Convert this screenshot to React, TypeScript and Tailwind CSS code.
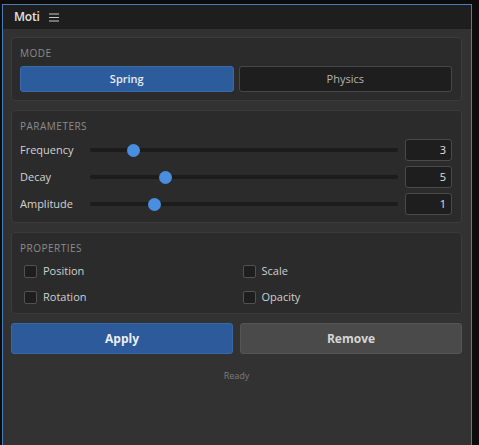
import React from 'react';

interface Param {
  label: string;
  value: number;
  pos: number;
}

const params: Param[] = [
  { label: 'Frequency', value: 3, pos: 14 },
  { label: 'Decay', value: 5, pos: 24.5 },
  { label: 'Amplitude', value: 1, pos: 21 },
];

const props = ['Position', 'Scale', 'Rotation', 'Opacity'];

const Section: React.FC<{ title: string; pb?: string; children: React.ReactNode }> = ({ title, pb = 'pb-[7px]', children }) => (
  <div className={`rounded-[4px] border border-[#3b3b3b] bg-[#2b2b2b] pl-[8px] pr-[9px] pt-[8px] ${pb}`}>
    <div className="text-[10px] leading-[14px] tracking-[0.5px] text-[#8c8c8c] mb-[6px]">{title}</div>
    {children}
  </div>
);

const App: React.FC = () => {
  return (
    <div
      className="w-[479px] h-[445px] bg-[#0c0c0c] overflow-hidden flex"
      style={{ fontFamily: '"Open Sans", "Noto Sans", sans-serif' }}
    >
      <div className="ml-[2px] mt-[4px] w-[470px] h-[445px] border border-[#4d7bb5] flex flex-col">
        {/* header */}
        <div className="h-[24px] bg-[#1e1e1e] flex items-center px-[11px] gap-[9px]">
          <span className="text-[12px] font-semibold text-[#e2e2e2] tracking-[-0.2px]">Moti</span>
          <svg width="10" height="9" viewBox="0 0 10 9" className="text-[#c8c8c8]">
            <path d="M0 1h10M0 4.5h10M0 8h10" stroke="currentColor" strokeWidth="1" />
          </svg>
        </div>

        {/* body */}
        <div className="flex-1 bg-[#323232] pl-[8px] pr-[9px] pt-[8px] flex flex-col gap-[9px]">
          <Section title="MODE">
            <div className="grid grid-cols-2 gap-[5px] pb-[1px]">
              <button className="h-[26px] rounded-[3px] bg-[#2d5c9c] border border-[#3a6aaa] text-[11px] font-semibold text-[#e8eef7]">
                Spring
              </button>
              <button className="h-[26px] rounded-[3px] bg-[#1e1e1e] border border-[#474747] text-[11px] text-[#b5b5b5]">
                Physics
              </button>
            </div>
          </Section>

          <Section title="PARAMETERS">
            <div className="flex flex-col gap-[5px]">
              {params.map(p => (
                <div key={p.label} className="flex items-center h-[22px]">
                  <span className="w-[70px] text-[11px] text-[#d2d2d2]">{p.label}</span>
                  <div className="relative flex-1 h-[4px] bg-[#1c1c1c] rounded-[2px]">
                    <div
                      className="absolute top-1/2 w-[13px] h-[13px] -mt-[6.5px] -ml-[6.5px] rounded-full bg-[#4a8ee0]"
                      style={{ left: `${p.pos}%` }}
                    />
                  </div>
                  <div className="ml-[7px] w-[47px] h-[22px] rounded-[3px] border border-[#4a4a4a] bg-[#1e1e1e] flex items-center justify-end pr-[5px] text-[11px] text-[#e0e0e0]">
                    {p.value}
                  </div>
                </div>
              ))}
            </div>
          </Section>

          <Section title="PROPERTIES" pb="pb-[5px]">
            <div className="grid grid-cols-2 gap-x-[5px] gap-y-[5px]">
              {props.map(name => (
                <label key={name} className="flex items-center gap-[6px] pl-[4px] h-[21px]">
                  <span className="w-[13px] h-[13px] rounded-[2px] border border-[#515151] bg-[#1e1e1e]" />
                  <span className="text-[11px] text-[#d0d0d0]">{name}</span>
                </label>
              ))}
            </div>
          </Section>

          <div className="flex gap-[7px]">
            <button className="flex-1 h-[31px] rounded-[3px] bg-[#2c5a9a] border border-[#3868a8] text-[12px] font-bold text-[#e9eef6]">
              Apply
            </button>
            <button className="flex-1 h-[31px] rounded-[3px] bg-[#4a4a4a] border border-[#555555] text-[12px] font-bold text-[#d6d6d6]">
              Remove
            </button>
          </div>

          <div className="text-center text-[9px] text-[#7c7c7c] mt-[6px]">Ready</div>
        </div>
      </div>
    </div>
  );
};

export default App;
